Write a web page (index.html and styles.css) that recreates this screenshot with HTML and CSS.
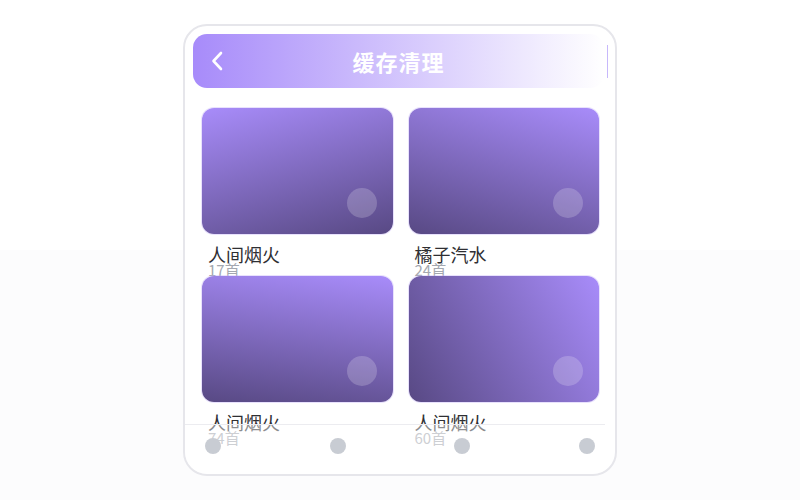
FILE: index.html
```html
<!DOCTYPE html>
<html lang="zh-CN">
<head>
  <meta charset="UTF-8" />
  <title>缓存清理</title>
  <link rel="stylesheet" href="styles.css">
</head>
<body>
  <div class="phone">
    <div class="header">
      <svg class="back" width="24" height="24" viewBox="0 0 24 24">
        <path d="M15 4 L7.5 12 L15 20" fill="none" stroke="#fff" stroke-width="2.6" stroke-linecap="round" stroke-linejoin="round" />
      </svg>
      <h1>缓存清理</h1>
    </div>

    <div class="grid">
      <div class="item">
        <div class="cover" style="background: linear-gradient(165deg, #a88cfa, #584984);"><span class="dot"></span></div>
        <div class="name">人间烟火</div>
        <div class="count">17首</div>
      </div>
      <div class="item">
        <div class="cover" style="background: linear-gradient(197deg, #a88cfa, #584984);"><span class="dot"></span></div>
        <div class="name">橘子汽水</div>
        <div class="count">24首</div>
      </div>
      <div class="item">
        <div class="cover" style="background: linear-gradient(188deg, #a88cfa, #584984);"><span class="dot"></span></div>
        <div class="name">人间烟火</div>
        <div class="count">74首</div>
      </div>
      <div class="item">
        <div class="cover" style="background: linear-gradient(240deg, #a88cfa, #584984);"><span class="dot"></span></div>
        <div class="name">人间烟火</div>
        <div class="count">60首</div>
      </div>
    </div>

    <div class="nav">
      <span class="tab"></span>
      <span class="tab"></span>
      <span class="tab"></span>
      <span class="tab"></span>
    </div>
  </div>
</body>
</html>
```

FILE: styles.css
```css
html, body {
  margin: 0;
  padding: 0;
  height: 100%;
}
body {
  background: linear-gradient(#ffffff 50%, #fcfcfd 50%);
  font-family: "Noto Sans CJK SC", "Noto Sans", sans-serif;
  display: flex;
  align-items: center;
  justify-content: center;
}

.phone {
  position: relative;
  width: 434px;
  height: 452px;
  box-sizing: border-box;
  border: 2px solid #e6e6eb;
  border-radius: 24px;
  background: #fff;
  overflow: hidden;
}

.header {
  position: relative;
  height: 54px;
  margin: 8px 11px 0 8px;
  border-radius: 14px;
  background: linear-gradient(90deg, #a78bfa, #ffffff);
  display: flex;
  align-items: center;
  justify-content: center;
}
.header::after {
  content: "";
  position: absolute;
  right: -4px;
  top: 11px;
  width: 1px;
  height: 33px;
  background: #c7b8fb;
}
.back {
  position: absolute;
  left: 13px;
  top: 15px;
}
.header h1 {
  margin: 0;
  color: #fff;
  font-size: 22px;
  font-weight: bold;
  letter-spacing: 1px;
}

.grid {
  display: grid;
  grid-template-columns: 1fr 1fr;
  column-gap: 16px;
  padding: 20px 16px 0 17px;
}

.cover {
  position: relative;
  height: 126px;
  border-radius: 12px;
  box-shadow: 0 0 0 1px rgba(190, 170, 250, 0.35);
}
.dot {
  position: absolute;
  right: 16px;
  bottom: 16px;
  width: 30px;
  height: 30px;
  border-radius: 50%;
  background: rgba(255, 255, 255, 0.2);
}

.name {
  margin-top: 10px;
  padding-left: 6px;
  font-size: 18px;
  line-height: 20px;
  color: #2f2f33;
}
.count {
  padding-left: 6px;
  font-size: 15px;
  line-height: 12px;
  color: #a4a8b0;
}

.nav {
  position: absolute;
  left: 0;
  right: 10px;
  bottom: 0;
  height: 50px;
  box-sizing: border-box;
  padding: 13px 10px 0 20px;
  border-top: 1px solid #ececf0;
  background: rgba(255, 255, 255, 0.45);
  display: flex;
  justify-content: space-between;
  align-items: flex-start;
}
.tab {
  width: 16px;
  height: 16px;
  border-radius: 50%;
  background: #c8ccd3;
}
```
